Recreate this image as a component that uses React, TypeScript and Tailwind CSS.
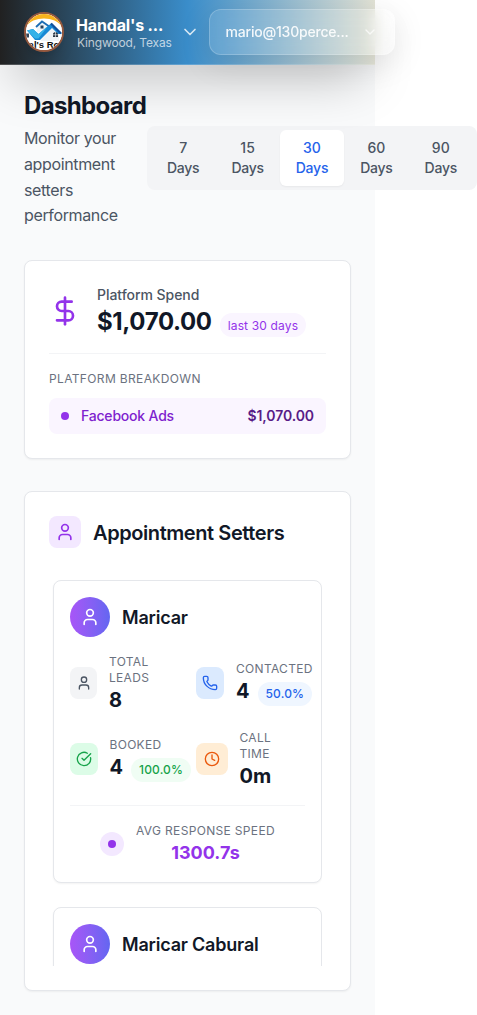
import React from "react";
import { ChevronDown, CircleCheckBig, Clock, DollarSign, Phone, User } from "lucide-react";

function Logo() {
  return (
    <div className="h-10 w-10 shrink-0 overflow-hidden rounded-full border-2 border-[#95593f] bg-white shadow-lg">
      <svg viewBox="0 0 36 36" className="h-9 w-9">
        <rect width="36" height="36" fill="#fff" />
        <path d="M-1 15C4 1 32 1 37 15V-2H-1Z" fill="#f9b31c" />
        <path d="M3 12C8 3 28 3 33 12L32 16H4Z" fill="#fff" />
        <path d="M11 13L16 8L23 13V18H11Z" fill="#eef4f8" />
        <path d="M10 13L16 7.5L24 13" fill="none" stroke="#1c6db4" strokeWidth="1.8" />
        <path d="M14.5 11.5H17.5V14.5H14.5Z" fill="#28425a" />
        <path d="M15 26L26 14L33 21V27H15Z" fill="#eef3f6" />
        <path d="M1 16.5L7 15L12.5 20L25.5 9L34 17.5L36 20H32L26 14L14 26H9Z" fill="#1688d4" />
        <path d="M1 16.5L7 15L12.5 20L22 12L12.5 24.5H9Z" fill="#35b2e8" />
        <path d="M25 9.5L35 19.5" stroke="#12529c" strokeWidth="2.2" />
        <path d="M27 23V20C27 17.5 32 17.5 32 20V23Z" fill="#263442" />
        <path d="M27 20.8H32M29.5 18V23" stroke="#fff" strokeWidth=".6" />
        <path d="M0 19.5H3V23.5H0Z" fill="#35485a" />
        <text x="18" y="34" textAnchor="middle" className="font-['Liberation_Sans'] text-[9.5px] font-bold" fill="#111">al's Ro</text>
      </svg>
    </div>
  );
}

function Header() {
  return (
    <header className="relative z-10 flex h-[65px] w-[375px] items-center border-b border-white/20 bg-[linear-gradient(90deg,#212121_0%,#3a8dca_50%,#e2e2d5_100%)] pl-6 shadow-[0_25px_50px_-12px_rgba(0,0,0,0.25)]">
      <Logo />
      <div className="ml-3 w-24 shrink-0 pt-0.5">
        <div className="text-base leading-5 font-bold tracking-[-0.15px] whitespace-nowrap text-white">Handal's ...</div>
        <div className="pl-px text-xs leading-4 tracking-[-0.15px] whitespace-nowrap text-white/70">Kingwood, Texas</div>
      </div>
      <ChevronDown className="ml-2 h-5 w-5 shrink-0 text-white/80" />
      <button className="ml-[9px] flex h-[46px] w-[186px] shrink-0 items-center rounded-xl border border-white/20 bg-white/10 pl-[15.5px] text-sm font-medium tracking-[-0.2px] text-white/90 shadow-[0_8px_32px_rgba(0,0,0,0.1)] backdrop-blur-sm">
        <span className="w-[124px] text-left whitespace-nowrap">mario@130perce...</span>
        <ChevronDown className="ml-3 h-4 w-4 shrink-0 text-white/70" />
      </button>
    </header>
  );
}

const ranges = [7, 15, 30, 60, 90];

function RangePicker() {
  return (
    <div className="grid w-[330px] shrink-0 grid-cols-5 rounded-lg bg-[#f3f4f6] p-1">
      {ranges.map((n) => (
        <button
          key={n}
          className={
            n === 30
              ? "rounded-md bg-white px-3 py-2 text-sm font-medium text-[#2563eb] shadow-xs"
              : "rounded-md px-3 py-2 text-sm font-medium text-[#4b5563]"
          }
        >
          {n}
          <br />
          <span className="tracking-[-0.25px]">Days</span>
        </button>
      ))}
    </div>
  );
}

function SpendCard() {
  return (
    <section className="rounded-lg border border-[#e5e7eb] bg-white p-6 shadow-xs">
      <div className="flex items-center gap-4 border-b border-[#f3f4f6] pb-4">
        <DollarSign className="h-8 w-8 text-[#9333ea]" />
        <div>
          <div className="text-sm font-medium tracking-[-0.05px] text-[#4b5563]">Platform Spend</div>
          <div className="flex h-8 items-baseline gap-2">
            <span className="translate-y-px text-2xl font-bold tracking-[-0.35px] text-[#111827]">$1,070.00</span>
            <span className="rounded-full bg-[#faf5ff] px-2 py-1 text-xs tracking-[0.15px] text-[#9333ea]">
              <span className="inline-block translate-y-px">last 30 days</span>
            </span>
          </div>
        </div>
      </div>
      <div className="mt-4 translate-y-px text-xs tracking-[0.35px] text-[#6b7280]">PLATFORM BREAKDOWN</div>
      <div className="mt-3 flex items-center rounded-lg bg-[#faf5ff] px-3 py-2 text-sm">
        <span className="mr-3 h-2 w-2 rounded-full bg-[#9333ea]" />
        <span className="font-medium tracking-[-0.2px] text-[#7e22ce]">Facebook Ads</span>
        <span className="ml-auto font-semibold tracking-[-0.08px] text-[#581c87]">$1,070.00</span>
      </div>
    </section>
  );
}

function SetterHeading({ name }: { name: string }) {
  return (
    <div className="flex items-center gap-3">
      <div className="flex h-10 w-10 items-center justify-center rounded-full bg-gradient-to-r from-[#a855f7] to-[#6366f1]">
        <User className="h-5 w-5 text-white" />
      </div>
      <h3 className="translate-y-px text-lg font-semibold tracking-[-0.2px] text-[#111827]">{name}</h3>
    </div>
  );
}

type MetricProps = {
  box: string;
  icon: React.ReactNode;
  label: React.ReactNode;
  value: string;
  badge?: string;
  badgeStyle?: string;
  textStyle?: string;
};

function Metric({ box, icon, label, value, badge, badgeStyle, textStyle = "" }: MetricProps) {
  return (
    <div className="flex min-w-0 items-center gap-3">
      <div className={`flex h-8 shrink-0 items-center justify-center rounded-lg ${box}`}>{icon}</div>
      <div className={textStyle}>
        <div className="text-xs tracking-wide text-[#6b7280]">{label}</div>
        <div className="flex items-baseline gap-2">
          <span className="text-xl font-bold text-[#111827]">{value}</span>
          {badge && <span className={`rounded-full px-2 py-1 text-xs font-medium tracking-[0.15px] ${badgeStyle}`}>{badge}</span>}
        </div>
      </div>
    </div>
  );
}

function Setters() {
  return (
    <section className="mt-8 h-[500px] rounded-lg border border-[#e5e7eb] bg-white p-6 shadow-xs">
      <div className="flex items-center gap-3">
        <div className="flex h-8 w-8 items-center justify-center rounded-lg bg-[#f3e8ff]">
          <User className="h-5 w-5 text-[#9333ea]" />
        </div>
        <h2 className="translate-y-px text-xl font-semibold tracking-[-0.42px] whitespace-nowrap text-[#111827]">Appointment Setters</h2>
      </div>
      <div className="mt-7 h-[390px] w-[273px] overflow-hidden pt-1 pl-1">
        <article className="w-[269px] rounded-lg border border-[#e5e7eb] bg-white p-4 shadow-xs">
          <SetterHeading name="Maricar" />
          <div className="mt-4 grid grid-cols-2 gap-4">
            <Metric box="w-[27px] bg-[#f3f4f6]" icon={<User className="h-4 w-4 text-[#4b5563]" />} label={<>TOTAL<br />LEADS</>} value="8" textStyle="translate-y-px" />
            <Metric box="w-[28.5px] bg-[#dbeafe]" icon={<Phone className="h-4 w-4 text-[#2563eb]" />} label="CONTACTED" value="4" badge="50.0%" badgeStyle="bg-[#eff6ff] text-[#2563eb]" />
            <Metric box="w-[27.5px] bg-[#dcfce7]" icon={<CircleCheckBig className="h-4 w-4 text-[#16a34a]" />} label="BOOKED" value="4" badge="100.0%" badgeStyle="bg-[#f0fdf4] text-[#16a34a]" />
            <Metric box="w-8 bg-[#ffedd5]" icon={<Clock className="h-4 w-4 text-[#ea580c]" />} label={<>CALL<br />TIME</>} value="0m" textStyle="translate-y-px" />
          </div>
          <div className="mt-4 flex items-center justify-center gap-3 border-t border-[#f3f4f6] pt-4">
            <div className="flex h-6 w-6 items-center justify-center rounded-full bg-[#f3e8ff]">
              <span className="h-2 w-2 rounded-full bg-[#9333ea]" />
            </div>
            <div className="translate-y-px text-center">
              <div className="text-xs tracking-[0.33px] text-[#6b7280]">AVG RESPONSE SPEED</div>
              <div className="text-lg font-bold text-[#9333ea]">1300.7s</div>
            </div>
          </div>
        </article>
        <article className="mt-6 h-[303px] w-[269px] rounded-lg border border-[#e5e7eb] bg-white p-4 shadow-xs">
          <SetterHeading name="Maricar Cabural" />
        </article>
      </div>
    </section>
  );
}

export default function App() {
  return (
    <div className="h-[1015px] w-[477px] overflow-hidden bg-white font-['Inter',sans-serif] antialiased">
      <div className="h-[1015px] w-[375px] bg-[#f9fafb]">
        <Header />
        <main className="px-6 pt-6">
          <div className="flex h-[138px] w-[453px] items-center">
            <div className="w-[123px] shrink-0">
              <h1 className="translate-y-0.5 text-2xl font-bold tracking-[-0.65px] text-[#111827]">Dashboard</h1>
              <p className="mt-[5px] translate-y-px text-base leading-[25.8px] tracking-[-0.36px] text-[#4b5563]">Monitor your appointment setters performance</p>
            </div>
            <RangePicker />
          </div>
          <div className="mt-[33px]">
            <SpendCard />
            <Setters />
          </div>
        </main>
      </div>
    </div>
  );
}
